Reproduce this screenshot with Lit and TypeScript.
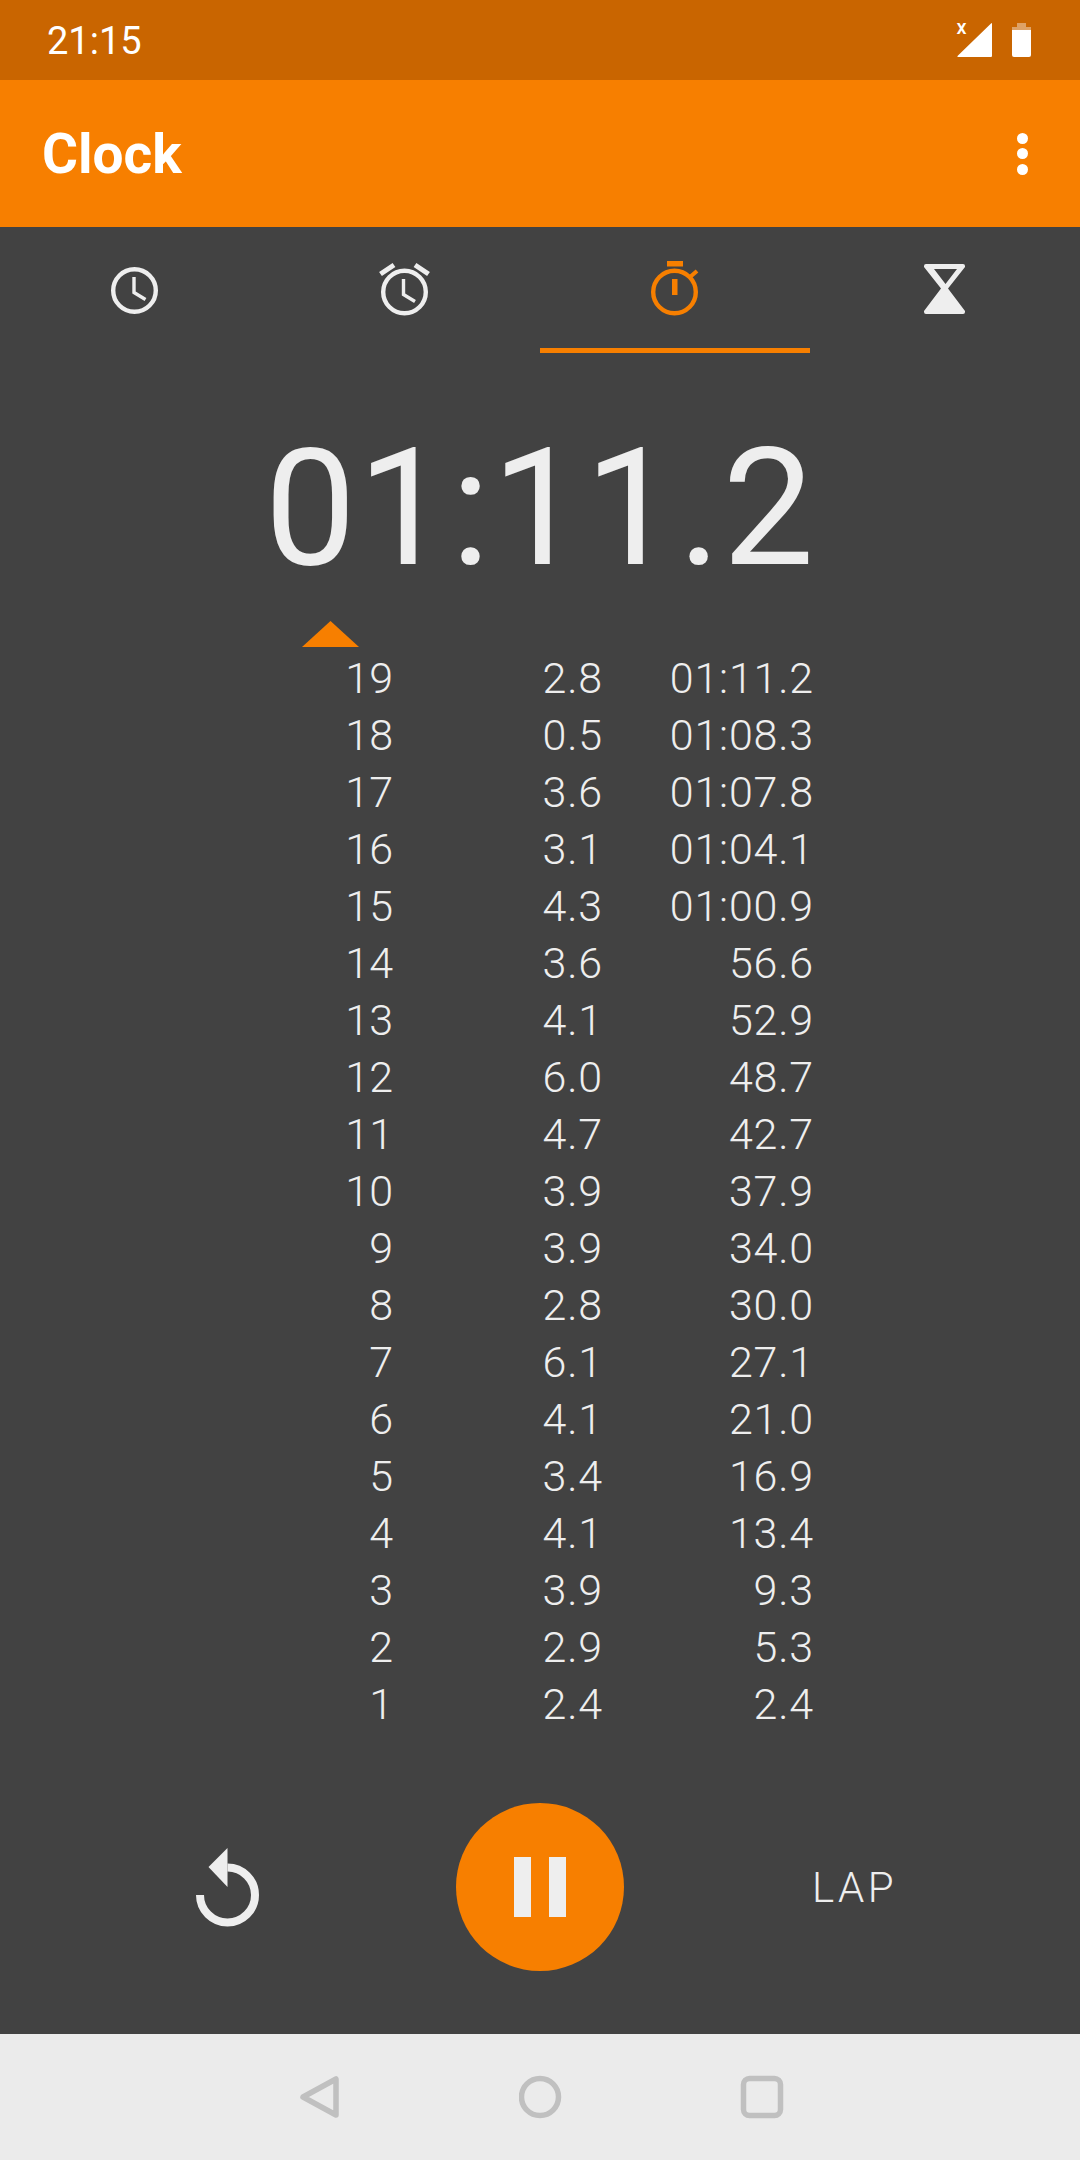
import { LitElement, css, html, svg } from "lit";
import { customElement } from "lit/decorators.js";

const LAPS: [number, string, string][] = [
  [19, "2.8", "01:11.2"],
  [18, "0.5", "01:08.3"],
  [17, "3.6", "01:07.8"],
  [16, "3.1", "01:04.1"],
  [15, "4.3", "01:00.9"],
  [14, "3.6", "56.6"],
  [13, "4.1", "52.9"],
  [12, "6.0", "48.7"],
  [11, "4.7", "42.7"],
  [10, "3.9", "37.9"],
  [9, "3.9", "34.0"],
  [8, "2.8", "30.0"],
  [7, "6.1", "27.1"],
  [6, "4.1", "21.0"],
  [5, "3.4", "16.9"],
  [4, "4.1", "13.4"],
  [3, "3.9", "9.3"],
  [2, "2.9", "5.3"],
  [1, "2.4", "2.4"],
];

// tab icons share a 64x64 box, origin is (tab centre - 32, 259)
const TAB_ICONS = [
  svg`<circle cx="31.5" cy="31.5" r="21.3" fill="none" stroke="currentColor" stroke-width="4.4"/>
    <path d="M31 18v15.5l11.5 7" fill="none" stroke="currentColor" stroke-width="3.4"/>`,
  svg`<circle cx="31.5" cy="33" r="21.3" fill="none" stroke="currentColor" stroke-width="4.4"/>
    <path d="M30.500 20v15.500l11.500 7" fill="none" stroke="currentColor" stroke-width="3.400"/>
    <path d="M7.500 15l13.500-9M55.500 15l-13.500-9" fill="none" stroke="currentColor" stroke-width="5"/>`,
  svg`<circle cx="31.500" cy="33" r="21.300" fill="none" stroke="currentColor" stroke-width="4.400"/>
    <path d="M24 2h16v5.500H24zM29 20h5.500v16H29z" fill="currentColor"/>
    <path d="M47 18l7-6" fill="none" stroke="currentColor" stroke-width="4"/>`,
  svg`<path fill-rule="evenodd" d="M13 5h37q2 0 2 2v1L35 29.500 52 52v1q0 2-2 2H13q-2 0-2-2v-1l17-22.500L11 8V7q0-2 2-2zM21 10l11.500 15L44 10z" fill="currentColor"/>`,
];

@customElement("app-root")
export class AppRoot extends LitElement {
  static styles = css`
    :host {
      display: block;
      width: 1080px;
      height: 2160px;
      background: #424242;
      color: #eeeeee;
      font-family: Roboto, "Liberation Sans", sans-serif;
    }

    .page {
      display: flex;
      flex-direction: column;
      height: 2160px;
    }

    .status {
      display: flex;
      align-items: center;
      height: 80px;
      padding: 0 48px;
      box-sizing: border-box;
      background: #c96500;
      color: #ffffff;
      font-size: 38px;
    }

    .status .time {
      flex: 1;
      margin-top: 2px;
      margin-left: -1px;
    }

    .status svg {
      display: block;
      margin-right: -3px;
      overflow: visible;
    }

    .status text {
      font-size: 20px;
      font-weight: 500;
      fill: #ffffff;
    }

    .appbar {
      display: flex;
      align-items: center;
      justify-content: space-between;
      height: 147px;
      padding: 0 43px 0 42px;
      box-sizing: border-box;
      background: #f77f00;
      color: #ffffff;
      font-size: 55px;
      font-weight: 700;
    }

    .dots {
      display: grid;
      gap: 4.5px;
      margin-right: 9px;
    }

    .dots i {
      display: block;
      width: 11px;
      height: 11px;
      border-radius: 50%;
      background: #ffffff;
    }

    .tabs {
      display: grid;
      grid-template-columns: repeat(4, 270px);
      height: 126px;
    }

    .tab {
      display: flex;
      justify-content: center;
      box-sizing: border-box;
      height: 126px;
      padding-top: 32px;
    }

    .tab.active {
      color: #f77f00;
      border-bottom: 5px solid #f77f00;
    }

    .tab svg {
      display: block;
      width: 64px;
      height: 64px;
    }

    .timer {
      margin-top: 56px;
      height: 198px;
      line-height: 200px;
      font-size: 163px;
      font-weight: 400;
      letter-spacing: 1.5px;
      text-align: center;
    }

    .marker {
      display: block;
      width: 57px;
      height: 26px;
      margin: 14px 0 3px 302px;
      fill: #f77f00;
    }

    .laps {
      display: grid;
      grid-template-columns: 93px 210px 211px;
      margin-left: 300px;
      font-size: 43px;
      font-weight: 350;
      letter-spacing: 0.8px;
      line-height: 57px;
      text-align: right;
    }

    .laps .num {
      letter-spacing: 0;
    }

    .controls {
      display: grid;
      grid-template-columns: 456px 168px 456px;
      align-items: center;
      justify-items: center;
      margin-top: 70px;
    }

    .reset {
      display: block;
    }

    .fab {
      display: flex;
      align-items: center;
      justify-content: center;
      gap: 18px;
      width: 168px;
      height: 168px;
      border-radius: 50%;
      background: #f77f00;
    }

    .fab i {
      display: block;
      width: 17px;
      height: 60px;
      background: #eeeeee;
    }

    .lap {
      padding-left: 5px;
      font-size: 42px;
      font-weight: 300;
      letter-spacing: 3.5px;
    }

    .nav {
      display: flex;
      align-items: center;
      gap: 177px;
      height: 126px;
      margin-top: auto;
      padding-left: 298px;
      background: #ebebeb;
    }

    .nav svg {
      display: block;
      width: 44px;
      height: 44px;
      fill: none;
      stroke: #c0c0c0;
      stroke-width: 5.5;
      stroke-linejoin: round;
    }
  `;

  protected render() {
    return html`
      <div class="page">
        <div class="status">
          <span class="time">21:15</span>
          <svg width="80" height="40" viewBox="0 0 80 40">
            <path d="M37 4v32q0 1-1 1H3q-1 0-.500-1L36 3.500q1-1 1 .500z" fill="#fff"/>
            <text x="1.500" y="14">x</text>
            <path d="M62 3h9v4h5v6H57V7h5z" fill="#fff" opacity=".4"/>
            <path d="M57 10h19v25q0 2-2 2H59q-2 0-2-2z" fill="#fff"/>
          </svg>
        </div>
        <div class="appbar">
          <span>Clock</span>
          <div class="dots"><i></i><i></i><i></i></div>
        </div>
        <div class="tabs">
          ${TAB_ICONS.map(
            (icon, index) => html`
              <div class="tab ${index === 2 ? "active" : ""}">
                <svg viewBox="0 0 64 64">${icon}</svg>
              </div>
            `
          )}
        </div>
        <div class="timer">01:11.2</div>
        <svg class="marker" viewBox="0 0 57 26"><path d="M28.500 0L57 26H0z"/></svg>
        <div class="laps">
          ${LAPS.map(
            ([lap, split, total]) => html`
              <span class="num">${lap}</span><span>${split}</span><span>${total}</span>
            `
          )}
        </div>
        <div class="controls">
          <svg class="reset" width="64" height="80" viewBox="0 0 64 80">
            <path d="M4 48a27.500 27.500 0 1 0 27.500-27.500" fill="none" stroke="#eee" stroke-width="8"/>
            <path d="M12.500 20L31.500 1v39z" fill="#eee"/>
          </svg>
          <div class="fab"><i></i><i></i></div>
          <div class="lap">LAP</div>
        </div>
        <div class="nav">
          <svg viewBox="0 0 44 44"><path d="M5 22L38 4v36z"/></svg>
          <svg viewBox="0 0 44 44"><circle cx="21" cy="22" r="18.500"/></svg>
          <svg viewBox="0 0 44 44"><rect x="3.500" y="3.500" width="37" height="37" rx="6"/></svg>
        </div>
      </div>
    `;
  }
}
